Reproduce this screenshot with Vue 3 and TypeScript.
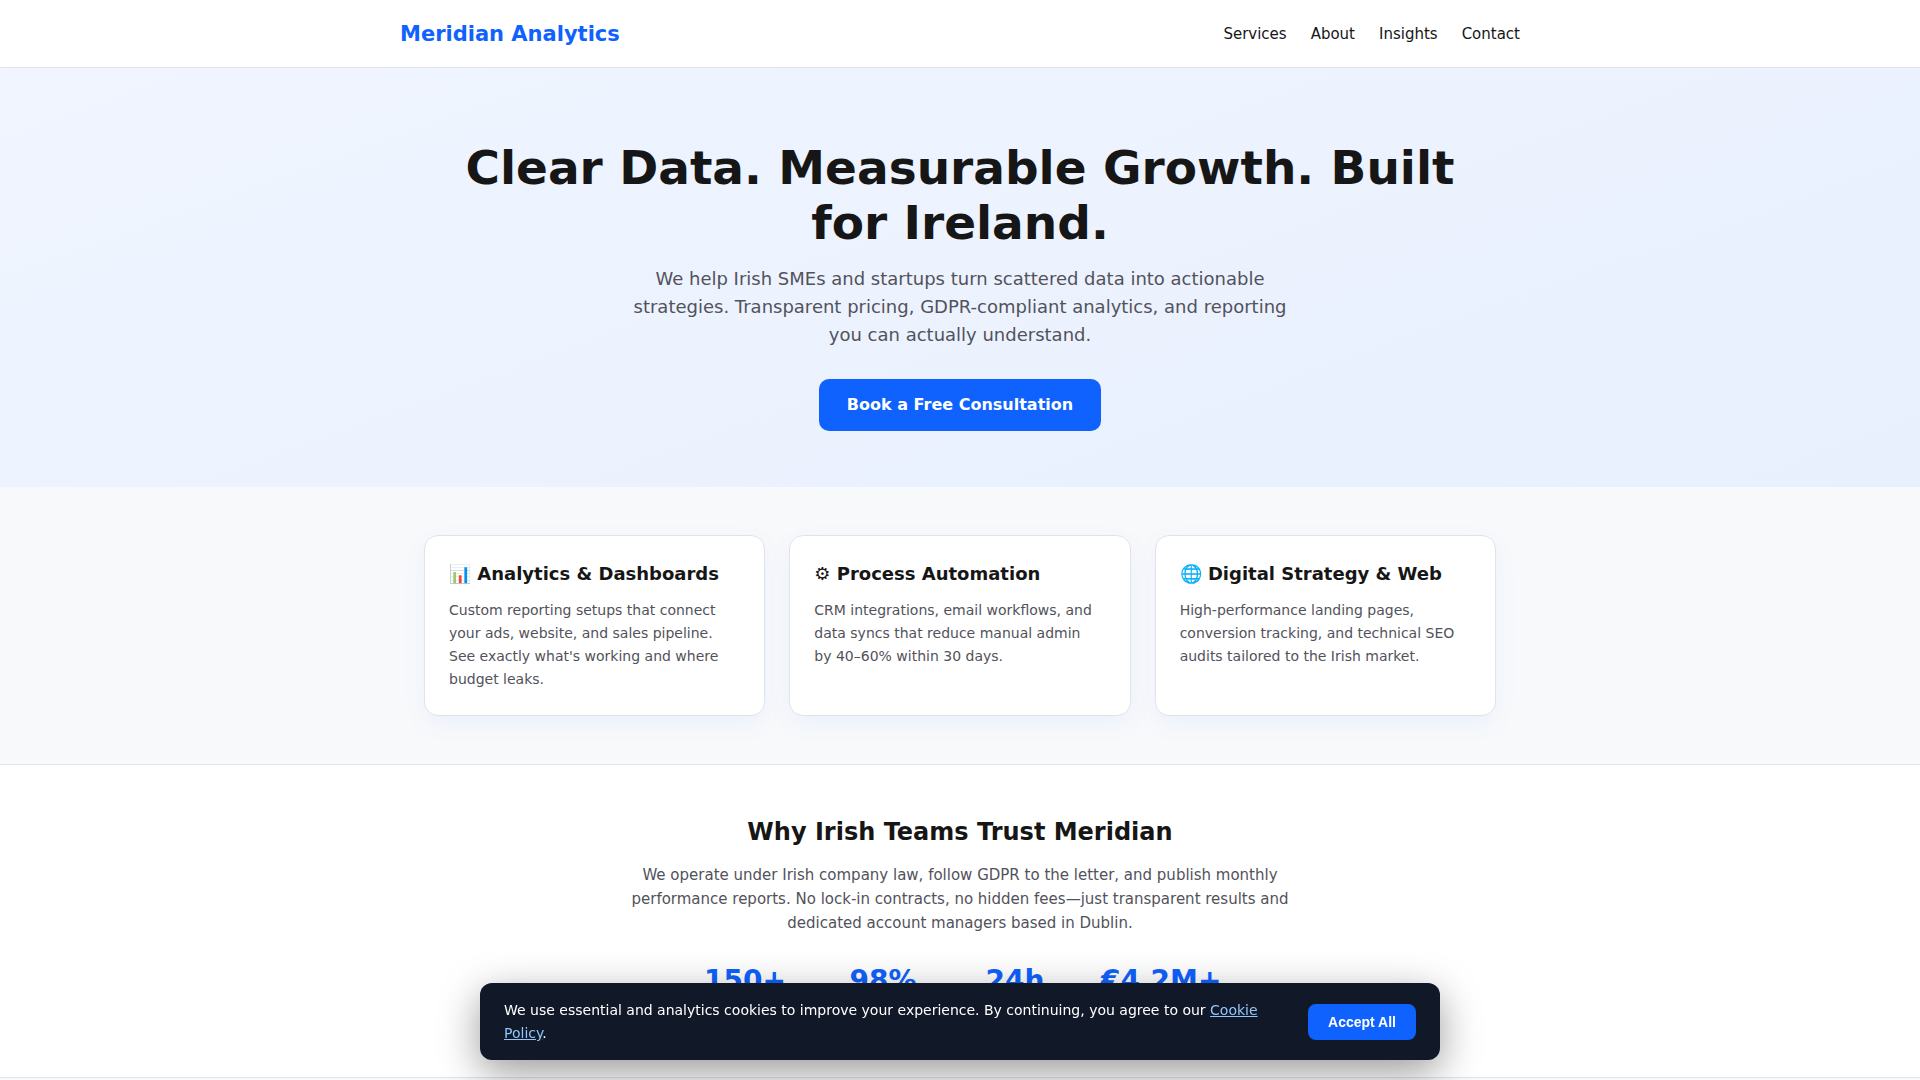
<script setup lang="ts">
interface Card {
  icon: string
  title: string
  text: string
}

const links: string[] = ['Services', 'About', 'Insights', 'Contact']

const cards: Card[] = [
  {
    icon: '📊',
    title: 'Analytics & Dashboards',
    text: "Custom reporting setups that connect your ads, website, and sales pipeline. See exactly what's working and where budget leaks.",
  },
  {
    icon: '⚙',
    title: 'Process Automation',
    text: 'CRM integrations, email workflows, and data syncs that reduce manual admin by 40–60% within 30 days.',
  },
  {
    icon: '🌐',
    title: 'Digital Strategy & Web',
    text: 'High-performance landing pages, conversion tracking, and technical SEO audits tailored to the Irish market.',
  },
]

const stats: string[] = ['150+', '98%', '24h', '€4.2M+']
</script>

<template>
  <div class="page">
    <header class="site-header">
      <div class="bar">
        <a class="logo" href="#">Meridian Analytics</a>
        <nav class="nav" aria-label="Main">
          <a v-for="link in links" :key="link" :href="'#' + link.toLowerCase()">{{ link }}</a>
        </nav>
      </div>
    </header>

    <main>
      <section class="hero">
        <h1>Clear Data. Measurable Growth. Built for Ireland.</h1>
        <p>
          We help Irish SMEs and startups turn scattered data into actionable strategies.
          Transparent pricing, GDPR-compliant analytics, and reporting you can actually understand.
        </p>
        <a class="cta" href="#contact">Book a Free Consultation</a>
      </section>

      <section id="services" class="services">
        <div class="cards">
          <article v-for="card in cards" :key="card.title" class="card">
            <h3>{{ card.icon }} {{ card.title }}</h3>
            <p>{{ card.text }}</p>
          </article>
        </div>
      </section>

      <section id="about" class="trust">
        <h2>Why Irish Teams Trust Meridian</h2>
        <p class="intro">
          We operate under Irish company law, follow GDPR to the letter, and publish monthly
          performance reports. No lock-in contracts, no hidden fees—just transparent results and
          dedicated account managers based in Dublin.
        </p>
        <div class="stats">
          <strong v-for="stat in stats" :key="stat">{{ stat }}</strong>
        </div>
      </section>
    </main>

    <div class="cookies" role="region" aria-label="Cookies">
      <p>
        We use essential and analytics cookies to improve your experience. By continuing, you agree
        to our <a href="#cookies">Cookie Policy</a>.
      </p>
      <button type="button">Accept All</button>
    </div>
  </div>
</template>

<style>
body {
  margin: 0;
  background: #f8f9fb;
}
</style>

<style scoped>
.page {
  font-family: 'DejaVu Sans', sans-serif;
  font-size: 16px;
  line-height: 1.6;
  color: #161616;
}

h1,
h2,
h3,
p {
  margin: 0;
}

.site-header {
  background: #fff;
  border-bottom: 1px solid #e2e3e7;
}

.bar {
  display: flex;
  align-items: center;
  justify-content: space-between;
  max-width: 1120px;
  margin: 0 auto;
  padding: 16px 24px 15px;
}

.logo {
  font-size: 21px;
  line-height: 36px;
  font-weight: 700;
  color: #0f62fe;
  text-decoration: none;
}

.nav {
  display: flex;
  gap: 24px;
  font-size: 15px;
  line-height: 24px;
}

.nav a {
  color: #161616;
  text-decoration: none;
}

.hero {
  padding: 72px 24px 56px;
  text-align: center;
  background: linear-gradient(160deg, #f0f5ff, #e8f0fe);
}

.hero h1 {
  max-width: 1072px;
  margin: 0 auto 15px;
  font-size: 47px;
  line-height: 55px;
  font-weight: 700;
}

.hero p {
  max-width: 680px;
  margin: 0 auto 30px;
  font-size: 18px;
  line-height: 28px;
  color: #52525b;
}

.cta {
  display: block;
  width: fit-content;
  margin: 0 auto;
  padding: 13px 28px;
  border-radius: 10px;
  background: #0f62fe;
  color: #fff;
  font-size: 16px;
  line-height: 26px;
  font-weight: 600;
  text-decoration: none;
}

.services {
  padding: 48px 24px;
}

.cards {
  display: grid;
  grid-template-columns: repeat(3, 1fr);
  gap: 24px;
  max-width: 1072px;
  margin: 0 auto;
}

.card {
  padding: 24px;
  border: 1px solid #e2e3e7;
  border-radius: 14px;
  background: #fff;
  box-shadow: 0 8px 24px rgba(15, 98, 254, 0.06);
}

.card h3 {
  margin-bottom: 12px;
  font-size: 18px;
  line-height: 27px;
}

.card p {
  max-width: 284px;
  font-size: 14px;
  line-height: 23px;
  color: #52525b;
}

.trust {
  padding: 48px 24px 74px;
  border-top: 1px solid #e2e3e7;
  border-bottom: 1px solid #e2e3e7;
  background: #fff;
  text-align: center;
}

.trust h2 {
  margin-bottom: 12px;
  font-size: 24px;
  line-height: 38px;
}

.intro {
  max-width: 680px;
  margin: 0 auto;
  font-size: 15px;
  line-height: 24px;
  color: #52525b;
}

.stats {
  display: grid;
  grid-template-columns: 88px 92px 76px 118px;
  justify-content: center;
  gap: 48px;
  margin-top: 23px;
}

.stats strong {
  font-size: 28px;
  line-height: 45px;
  color: #0f62fe;
}

.cookies {
  position: fixed;
  right: 24px;
  bottom: 20px;
  left: 24px;
  display: flex;
  align-items: center;
  justify-content: space-between;
  gap: 24px;
  box-sizing: border-box;
  max-width: 960px;
  margin: 0 auto;
  padding: 16px 24px 15px;
  border-radius: 12px;
  background: #111827;
  box-shadow: 0 12px 40px rgba(0, 0, 0, 0.4);
}

.cookies p {
  font-size: 14px;
  line-height: 23px;
  color: #fff;
}

.cookies a {
  color: #93c5fd;
}

.cookies button {
  flex-shrink: 0;
  padding: 10px 20px;
  border: 0;
  border-radius: 8px;
  background: #0f62fe;
  color: #fff;
  font-family: 'Liberation Sans', sans-serif;
  font-size: 14px;
  line-height: 16px;
  font-weight: 600;
  cursor: pointer;
}
</style>
